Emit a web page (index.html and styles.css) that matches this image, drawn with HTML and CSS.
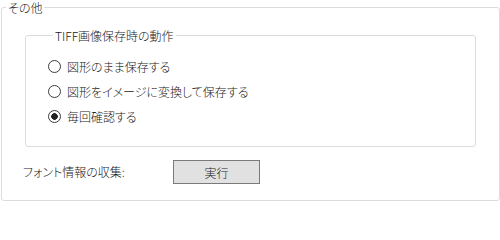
FILE: index.html
```html
<!DOCTYPE html>
<html lang="ja">
<head>
<meta charset="utf-8">
<link rel="stylesheet" href="styles.css">
</head>
<body>
<fieldset class="group outer">
  <legend class="caption outer-caption">その他</legend>
  <fieldset class="group inner">
    <legend class="caption inner-caption">TIFF画像保存時の動作</legend>
    <label class="option"><input type="radio" name="tiff" class="radio"><span>図形のまま保存する</span></label>
    <label class="option"><input type="radio" name="tiff" class="radio"><span>図形をイメージに変換して保存する</span></label>
    <label class="option"><input type="radio" name="tiff" class="radio" checked><span>毎回確認する</span></label>
  </fieldset>
  <div class="action-row">
    <span class="action-label">フォント情報の収集:</span>
    <button class="btn" type="button">実行</button>
  </div>
</fieldset>
</body>
</html>
```
FILE: styles.css
```css
* { box-sizing: border-box; }
html, body {
  margin: 0;
  padding: 0;
  background: #ffffff;
}
body {
  width: 500px;
  height: 201px;
  overflow: hidden;
  font-family: "Noto Sans CJK JP", "Noto Sans", sans-serif;
  font-size: 12px;
  font-weight: 300;
  font-feature-settings: "palt";
  color: #1a1a1a;
}
.group {
  margin: 0;
  padding: 0;
  border: 1px solid #dcdcdc;
  border-radius: 3px;
  min-width: 0;
}
.caption {
  padding: 0 2px;
  height: 15px;
  line-height: 15px;
  font-size: 12px;
}
.outer {
  margin-left: 1px;
  width: 499px;
  height: 201px;
  padding-bottom: 16px;
}
.outer-caption { margin-left: 4px; }
.inner {
  margin: 13px 23px 0 23px;
  height: 119px;
  padding: 11px 0 0 22px;
}
.inner-caption { margin-left: 5px; }
.option {
  display: flex;
  align-items: center;
  height: 25px;
  line-height: 25px;
}
.radio {
  appearance: none;
  -webkit-appearance: none;
  width: 13px;
  height: 13px;
  margin: 0 6px 0 0;
  border: 1px solid #3c3c3c;
  border-radius: 50%;
  background: #ffffff;
  flex: none;
}
.radio:checked {
  background: radial-gradient(circle, #222 0, #222 3px, #fff 3.6px);
}
.action-row {
  display: flex;
  align-items: center;
  margin-top: 13px;
  padding-left: 21px;
  height: 24px;
}
.action-label {
  width: 150px;
  line-height: 24px;
}
.btn {
  width: 87px;
  height: 24px;
  padding: 0;
  border: 1px solid #7a7a7a;
  background: #e1e1e1;
  border-radius: 0;
  font-family: inherit;
  font-size: 12px;
  font-weight: 300;
  font-feature-settings: "palt";
  color: #1a1a1a;
}
```
